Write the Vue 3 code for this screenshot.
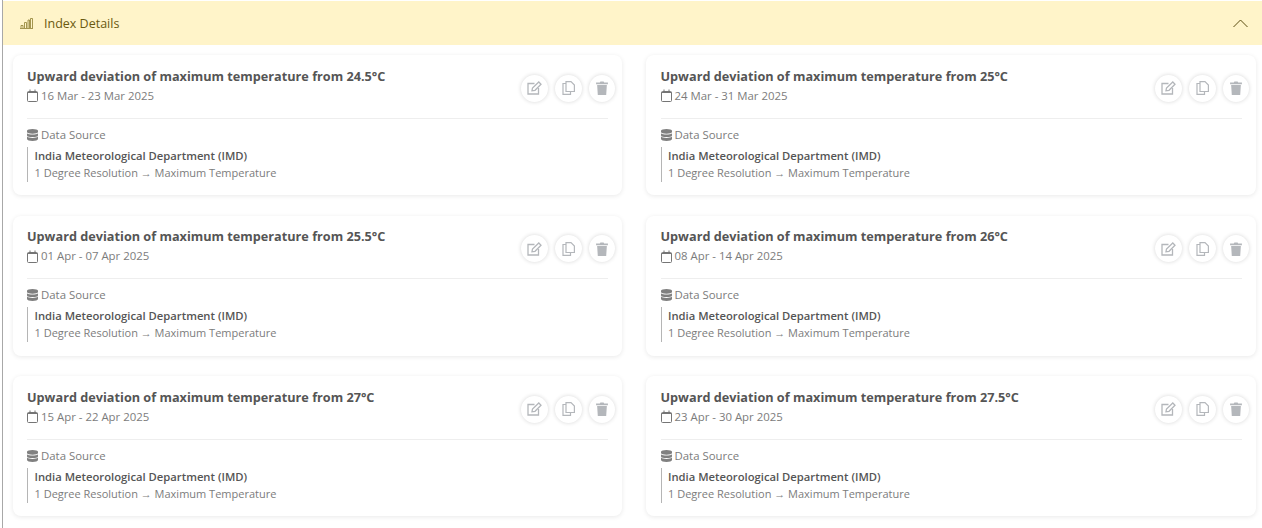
<script setup>
const cards = [
  { t: '24.5', d: '16 Mar - 23 Mar 2025' },
  { t: '25', d: '24 Mar - 31 Mar 2025' },
  { t: '25.5', d: '01 Apr - 07 Apr 2025' },
  { t: '26', d: '08 Apr - 14 Apr 2025' },
  { t: '27', d: '15 Apr - 22 Apr 2025' },
  { t: '27.5', d: '23 Apr - 30 Apr 2025' },
]
</script>

<template>
  <div class="page">
    <div class="head">
      <svg class="bars" width="13" height="11" viewBox="0 0 13 11" fill="none" stroke="#8d7d30" stroke-width="0.800">
        <path d="M0 10.500H13M1 10V7.500H3V10M4.500 10V4.500H6.500V10M8 10V2H9.500V10M10.500 10V.5H12.500V10" />
      </svg>
      <span class="head-title">Index Details</span>
      <svg class="chev" width="15" height="9" viewBox="0 0 15 9" fill="none" stroke="#5b4d10" stroke-width="1">
        <path d="M.5 8 7.500 1 14.500 8" />
      </svg>
    </div>
    <div class="grid">
      <div v-for="c in cards" :key="c.d" class="card">
        <div class="top">
          <div class="info">
            <div class="title">Upward deviation of maximum temperature from {{ c.t }}°C</div>
            <div class="date">
              <svg width="11" height="13" viewBox="0 0 11 13" fill="none" stroke="#757575" stroke-width="1">
                <path d="M1.500 2.500H9.500Q10.500 2.500 10.500 3.500V11.500Q10.500 12.500 9.500 12.500H1.500Q.5 12.500 .5 11.500V3.500Q.5 2.500 1.500 2.500ZM3 .5V2.500M8 .5V2.500M.5 3.500H10.500" />
              </svg>
              <span>{{ c.d }}</span>
            </div>
          </div>
          <div class="actions">
            <button class="act" aria-label="Edit">
              <svg width="15" height="14" viewBox="0 0 15 14" fill="none" stroke="#b4b7bb" stroke-width="1.300">
                <path d="M7.500 2.500H1V13H11.500V7" />
                <path d="M5 9.700 5.500 7 11.800 1 14 3.200 8 9.300Z" />
              </svg>
            </button>
            <button class="act" aria-label="Copy">
              <svg width="13" height="14" viewBox="0 0 13 14" fill="none" stroke="#b4b7bb" stroke-width="1.200">
                <path d="M4 2.500H1V13.400H8.500V10.500" />
                <path d="M4 .6H9L12.400 4V10.500H4Z" />
              </svg>
            </button>
            <button class="act act-last" aria-label="Delete">
              <svg width="12" height="14" viewBox="0 0 11 13" fill="#b4b7bb">
                <path d="M0 1.500H3.500L4 .5H7L7.500 1.500H11V3H0ZM1 3.800H10L9.400 13H1.600Z" />
              </svg>
            </button>
          </div>
        </div>
        <div class="source">
          <div class="src-label">
            <svg width="11" height="12" viewBox="0 0 11 12" fill="#808080">
              <path d="M5.500 0C8.500 0 11 .8 11 1.800V3C11 4 8.500 4.700 5.500 4.700S0 4 0 3V1.800C0 .8 2.500 0 5.500 0ZM0 4.200C1 5.200 3.300 5.600 5.500 5.600S10 5.200 11 4.200V6.400C11 7.400 8.500 8.100 5.500 8.100S0 7.400 0 6.400ZM0 7.600C1 8.600 3.300 9 5.500 9S10 8.600 11 7.600V10C11 11 8.500 12 5.500 12S0 11 0 10Z" />
            </svg>
            <span>Data Source</span>
          </div>
          <div class="src-body">
            <div class="src-name">India Meteorological Department (IMD)</div>
            <div class="src-path">1 Degree Resolution → Maximum Temperature</div>
          </div>
        </div>
      </div>
    </div>
  </div>
</template>

<style>
html, body { margin: 0; background: #fff; }
</style>

<style scoped>
.page {
  width: 1260px;
  height: 528px;
  margin-left: 2px;
  box-sizing: border-box;
  overflow: hidden;
  border-left: 1px solid #a8a8a8;
  padding-top: 1px;
  font-family: "Open Sans", "Noto Sans", sans-serif;
  background: #fff;
}
.head {
  height: 44px;
  display: flex;
  align-items: center;
  padding: 0 14px 0 17px;
  background: #fff4c9;
}
.bars { margin-right: 11px; }
.head-title { font-size: 12.500px; color: #6b5a10; }
.chev { margin-left: auto; }
.grid {
  display: grid;
  grid-template-columns: 609.5px 609.5px;
  column-gap: 24px;
  row-gap: 20.500px;
  padding: 10px 0 0 9.500px;
}
.card {
  height: 140px;
  box-sizing: border-box;
  border-radius: 8px;
  background: #fff;
  box-shadow: 0 1px 5px rgba(0, 0, 0, 0.09);
  padding: 11.500px 14px 0 14.500px;
}
.top {
  display: flex;
  justify-content: space-between;
  height: 51px;
  border-bottom: 1px solid #eeeeee;
}
.title { font-size: 12.700px; font-weight: 700; color: #555; line-height: 18px; }
.date {
  display: flex;
  align-items: center;
  gap: 3px;
  margin-top: 3px;
  font-size: 11.400px;
  line-height: 16px;
  color: #7c7c7c;
}
.actions {
  display: flex;
  gap: 7px;
  margin: 8px -7px 0 0;
}
.act {
  width: 27px;
  height: 27px;
  border: 0;
  padding: 0;
  border-radius: 50%;
  background: #fff;
  box-shadow: 0 0 4px rgba(0, 0, 0, 0.16);
  display: flex;
  align-items: center;
  justify-content: center;
}
.act-last { width: 26px; }
.source { padding-top: 8px; }
.src-label {
  display: flex;
  align-items: center;
  gap: 3px;
  font-size: 11.400px;
  line-height: 16px;
  color: #7c7c7c;
}
.src-body {
  margin-top: 4px;
  border-left: 1px solid #b5b5b5;
  padding-left: 6.500px;
  height: 35px;
}
.src-name { font-size: 11.250px; font-weight: 600; color: #555; line-height: 17px; }
.src-path { font-size: 11px; color: #7c7c7c; line-height: 17px; }
</style>
